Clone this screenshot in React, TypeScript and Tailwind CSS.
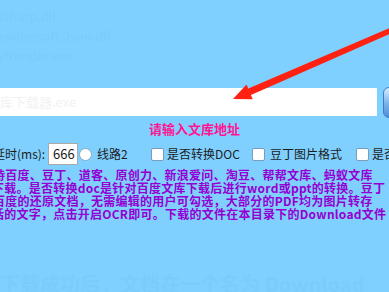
const purpleLines = [
  { text: "持百度、豆丁、道客、原创力、新浪爱问、淘豆、帮帮文库、蚂蚁文库", shift: "-ml-[7px]" },
  { text: "下载。是否转换doc是针对百度文库下载后进行word或ppt的转换。豆丁", shift: "-ml-[8px]" },
  { text: "百度的还原文档，无需编辑的用户可勾选，大部分的PDF均为图片转存", shift: "-ml-[7px]" },
  { text: "话的文字，点击开启OCR即可。下载的文件在本目录下的Download文件", shift: "-ml-[8px]" },
];

const CheckBox = () => <span className="block h-[13px] w-[13px] shrink-0 rounded-[2px] border border-[#7d9cb8] bg-white" />;

const Arrow = () => (
  <svg className="pointer-events-none absolute inset-0" width="389" height="292" viewBox="0 0 389 292" aria-hidden="true">
    <polygon
      points="233,99 246.5,84.5 248.3,88.6 392,27 392,33 250.9,95 252.8,99.3"
      fill="#ff2212"
    />
  </svg>
);

export default function App() {
  return (
    <div className="relative h-[292px] w-[389px] overflow-hidden bg-[#80d0ff] font-['Noto_Sans_CJK_SC',sans-serif]">
      {/* faint leftovers from the window behind */}
      <div className="h-[88px] pt-[6px] text-[13px] leading-[20px] text-[#7bcbfb]">
        <div className="-ml-[2px]">tsharp.dll</div>
        <div className="-ml-[2px]">ewtonsoft.Json.dll</div>
        <div className="-ml-[2px]">yfrender.exe</div>
      </div>

      <div className="flex h-[28px] items-center">
        <div className="flex h-full w-[377px] shrink-0 items-center bg-white text-[13px] text-[#f2f2f2]">库下载器.exe</div>
        <div className="ml-[6px] h-[31px] w-[30px] shrink-0 rounded-[6px] border border-[#3d7fc6] bg-gradient-to-b from-[#d6ecff] via-[#7fb6ea] to-[#4e8fd6]" />
      </div>

      <div className="mt-[6px] text-center text-[13px] font-bold leading-[14px] text-[#ff1493]">请输入文库地址</div>

      <div className="-ml-[7px] mt-[7px] flex h-[22px] items-center whitespace-nowrap text-[12px] text-[#1c1c1c]">
        <span className="w-[52px] shrink-0">延时(ms):</span>
        <span className="ml-[3px] flex h-[22px] w-[30px] shrink-0 items-center border border-[#a9a9a9] bg-white pl-[4px] text-[13px]">666</span>
        <span className="ml-[1px] h-[13px] w-[13px] shrink-0 rounded-full border border-[#8aa9c4] bg-white" />
        <span className="ml-[5px] w-[33px] shrink-0">线路2</span>
        <span className="ml-[21px]"><CheckBox /></span>
        <span className="ml-[3px] w-[77px] shrink-0">是否转换DOC</span>
        <span className="ml-[8px]"><CheckBox /></span>
        <span className="ml-[5px] w-[72px] shrink-0">豆丁图片格式</span>
        <span className="ml-[14px]"><CheckBox /></span>
        <span className="ml-[3px] shrink-0">是否开启OCR</span>
      </div>

      <div className="mt-[3px] text-[12px] font-bold leading-[13px] tracking-[0.25px] text-[#9400d3]">
        {purpleLines.map((line) => (
          <div key={line.text} className={`whitespace-nowrap ${line.shift}`}>
            {line.text}
          </div>
        ))}
      </div>

      <div className="mt-[52px] whitespace-nowrap text-[20px] font-bold leading-[24px] text-[#7bcbfb]">
        下载成功后，文档在一个名为 Download
      </div>

      <Arrow />
    </div>
  );
}
